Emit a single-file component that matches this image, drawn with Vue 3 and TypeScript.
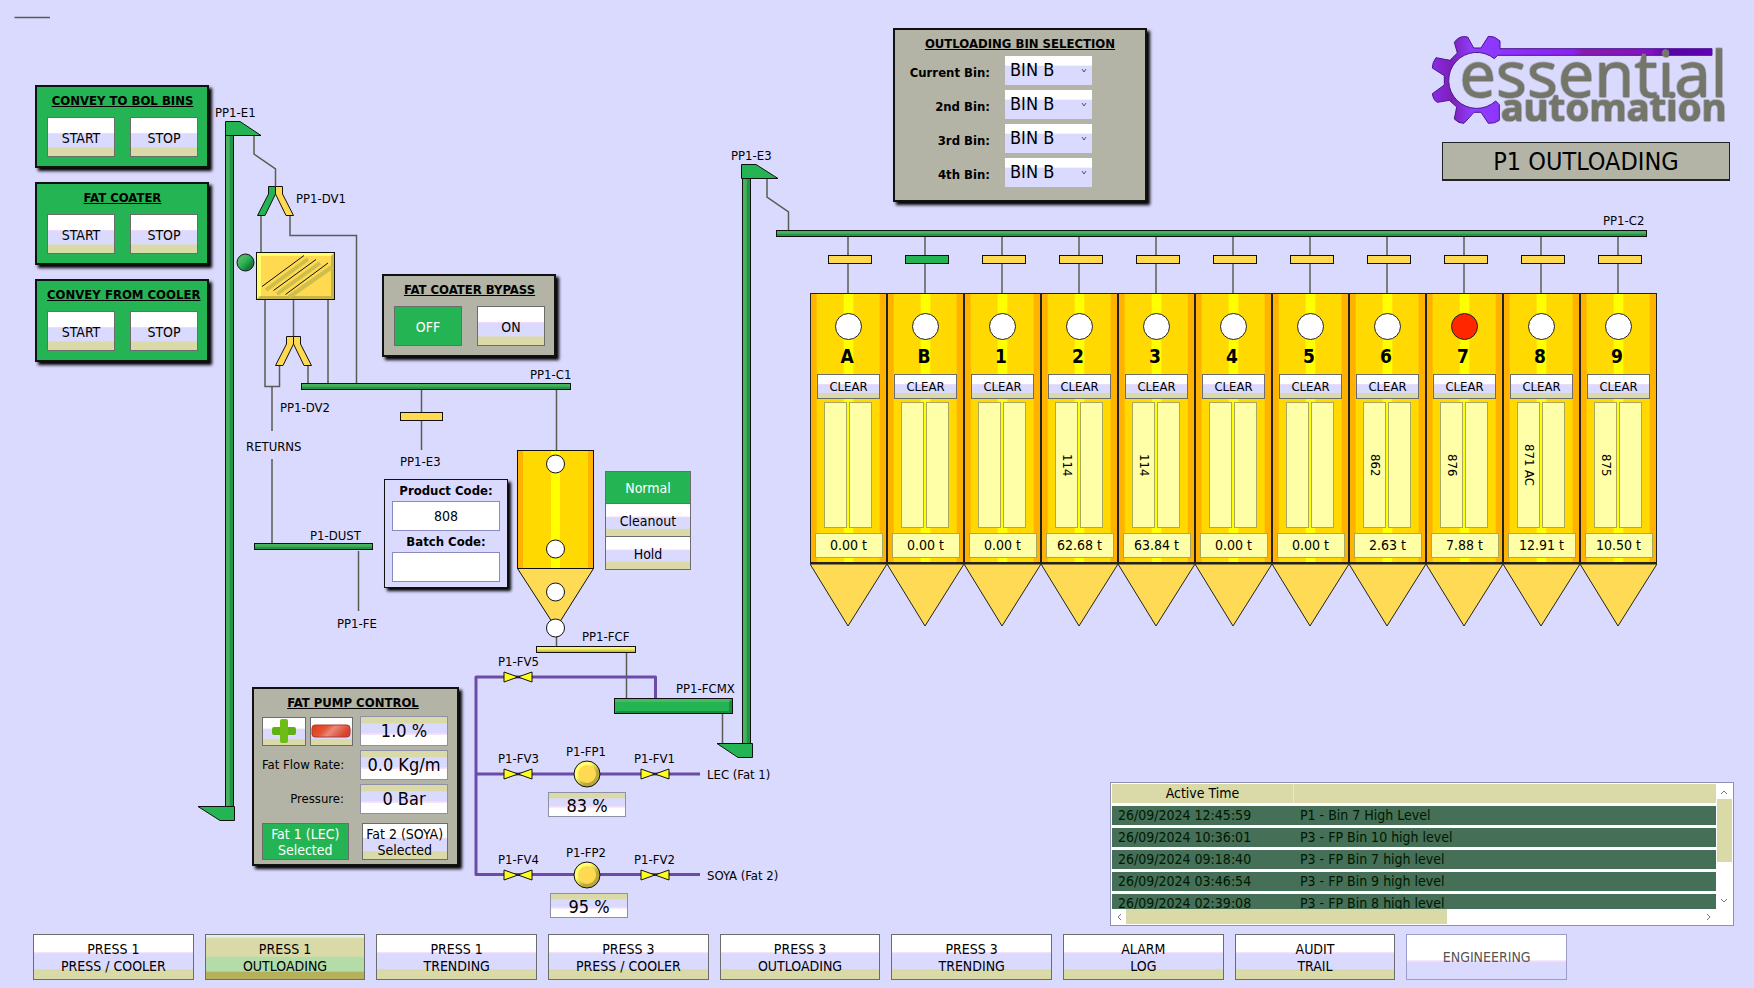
<script setup lang="ts">
import { ref } from 'vue'

interface Bin {
  name: string
  product: string
  weight: string
  high?: boolean
  open?: boolean
}

interface Label {
  x: number
  y: number
  text: string
}

const groups = ['CONVEY TO BOL BINS', 'FAT COATER', 'CONVEY FROM COOLER']

const bins: Bin[] = [
  { name: 'A', product: '', weight: '0.00 t' },
  { name: 'B', product: '', weight: '0.00 t', open: true },
  { name: '1', product: '', weight: '0.00 t' },
  { name: '2', product: '114', weight: '62.68 t' },
  { name: '3', product: '114', weight: '63.84 t' },
  { name: '4', product: '', weight: '0.00 t' },
  { name: '5', product: '', weight: '0.00 t' },
  { name: '6', product: '862', weight: '2.63 t' },
  { name: '7', product: '876', weight: '7.88 t', high: true },
  { name: '8', product: '871 AC', weight: '12.91 t' },
  { name: '9', product: '875', weight: '10.50 t' },
]

const binNames = bins.map((b) => 'BIN ' + b.name)
const selections = ref([
  { id: 'bin-1', label: 'Current Bin:', value: 'BIN B' },
  { id: 'bin-2', label: '2nd Bin:', value: 'BIN B' },
  { id: 'bin-3', label: '3rd Bin:', value: 'BIN B' },
  { id: 'bin-4', label: '4th Bin:', value: 'BIN B' },
])

const bypass = ref('OFF')
const mode = ref('Normal')
const fat = ref(1)
const productCode = ref('808')
const batchCode = ref('')

const labels: Label[] = [
  { x: 215, y: 117, text: 'PP1-E1' },
  { x: 296, y: 203, text: 'PP1-DV1' },
  { x: 280, y: 412, text: 'PP1-DV2' },
  { x: 530, y: 379, text: 'PP1-C1' },
  { x: 246, y: 451, text: 'RETURNS' },
  { x: 400, y: 466, text: 'PP1-E3' },
  { x: 310, y: 540, text: 'P1-DUST' },
  { x: 337, y: 628, text: 'PP1-FE' },
  { x: 582, y: 641, text: 'PP1-FCF' },
  { x: 676, y: 693, text: 'PP1-FCMX' },
  { x: 731, y: 160, text: 'PP1-E3' },
  { x: 1603, y: 225, text: 'PP1-C2' },
  { x: 498, y: 666, text: 'P1-FV5' },
  { x: 498, y: 763, text: 'P1-FV3' },
  { x: 566, y: 756, text: 'P1-FP1' },
  { x: 634, y: 763, text: 'P1-FV1' },
  { x: 707, y: 779, text: 'LEC (Fat 1)' },
  { x: 498, y: 864, text: 'P1-FV4' },
  { x: 566, y: 857, text: 'P1-FP2' },
  { x: 634, y: 864, text: 'P1-FV2' },
  { x: 707, y: 880, text: 'SOYA (Fat 2)' },
]

const valves = [
  { x: 518, y: 677 },
  { x: 518, y: 774 },
  { x: 655, y: 774 },
  { x: 518, y: 875 },
  { x: 655, y: 875 },
]

const pumps = [
  { x: 587, y: 774 },
  { x: 587, y: 875 },
]

const alarms = [
  { time: '26/09/2024 12:45:59', text: 'P1 - Bin 7 High Level' },
  { time: '26/09/2024 10:36:01', text: 'P3 - FP Bin 10 high level' },
  { time: '26/09/2024 09:18:40', text: 'P3 - FP Bin 7 high level' },
  { time: '26/09/2024 03:46:54', text: 'P3 - FP Bin 9 high level' },
  { time: '26/09/2024 02:39:08', text: 'P3 - FP Bin 8 high level' },
]

const screens = [
  ['PRESS 1', 'PRESS / COOLER'],
  ['PRESS 1', 'OUTLOADING'],
  ['PRESS 1', 'TRENDING'],
  ['PRESS 3', 'PRESS / COOLER'],
  ['PRESS 3', 'OUTLOADING'],
  ['PRESS 3', 'TRENDING'],
  ['ALARM', 'LOG'],
  ['AUDIT', 'TRAIL'],
  ['ENGINEERING'],
]
</script>

<template>
  <div class="screen">
    <main class="mimic">
      <svg class="pipes" width="1754" height="930" viewBox="0 0 1754 930" aria-hidden="true">
        <defs>
          <linearGradient id="leg" x1="0" x2="1" y1="0" y2="0">
            <stop offset="0.45" stop-color="#48b25c" />
            <stop offset="0.6" stop-color="#1f9549" />
          </linearGradient>
          <linearGradient id="belt" x1="0" x2="0" y1="0" y2="1">
            <stop offset="0.4" stop-color="#48b25c" />
            <stop offset="0.7" stop-color="#1f9549" />
          </linearGradient>
          <linearGradient id="feeder" x1="0" x2="0" y1="0" y2="1">
            <stop offset="0.4" stop-color="#f8f26a" />
            <stop offset="0.8" stop-color="#c6bb4a" />
          </linearGradient>
          <linearGradient id="shell" x1="0" x2="1" y1="0" y2="0">
            <stop offset="0.075" stop-color="#ffb200" />
            <stop offset="0.075" stop-color="#ffd900" />
            <stop offset="0.44" stop-color="#ffd900" />
            <stop offset="0.44" stop-color="#ffff00" />
            <stop offset="0.56" stop-color="#ffff00" />
            <stop offset="0.56" stop-color="#ffd900" />
            <stop offset="0.925" stop-color="#ffd900" />
            <stop offset="0.925" stop-color="#ffb200" />
          </linearGradient>
          <linearGradient id="rim" x1="0.15" x2="0.85" y1="0.15" y2="0.85">
            <stop offset="0.3" stop-color="#ffff70" />
            <stop offset="0.7" stop-color="#b9a83c" />
          </linearGradient>
          <linearGradient id="lamp" x1="0.15" x2="0.85" y1="0.15" y2="0.85">
            <stop offset="0.2" stop-color="#4cb860" />
            <stop offset="0.5" stop-color="#27ae52" />
            <stop offset="0.85" stop-color="#147c38" />
          </linearGradient>
        </defs>

        <g class="line">
          <path d="M14.500 17.500H50" />
          <path d="M254 136V154L275.500 169V186" />
          <path d="M261 216V252M290 216V235.500H356.500V383" />
          <path d="M265 300V386.500H279.500V366M272 387V431M293.500 300V336M328 300V383M308 366V383" />
          <path d="M421.500 390V450M556.500 390V450M272 459V543M358.500 551V611" />
          <path d="M556.500 636V646M626.500 653V698M722.500 714V743" />
          <path d="M767 179V197L788.500 212V230" />
          <path v-for="(b, i) in bins" :key="b.name" :d="`M${848 + 77 * i} 237V293`" />
        </g>

        <path class="fat" d="M655.500 698V677H476V874.500H700M476 774H700" />

        <g class="part">
          <rect x="225.500" y="135.500" width="8" height="671" fill="url(#leg)" />
          <path class="green" d="M225.500 121.500H240L261 135.500H225.500Z" />
          <path class="green" d="M198 806.500H234.500V820.500H220Z" />
          <rect x="742.500" y="178.500" width="8" height="565" fill="url(#leg)" />
          <path class="green" d="M741.500 164.500H756L778 178.500H741.500Z" />
          <path class="green" d="M717 743.500H752.500V757.500H738Z" />

          <path class="green" d="M268.500 186.500H275.500V194L265 215.500H257.500L268.500 194Z" />
          <path class="yellow" d="M282.500 186.500H275.500V194L286 215.500H293.500L282.500 194Z" />
          <path class="yellow" d="M286.500 336.500H293.500V344L283 365.500H275.500L286.500 344Z" />
          <path class="yellow" d="M300.500 336.500H293.500V344L304 365.500H311.500L300.500 344Z" />

          <circle cx="245.500" cy="262.500" r="8.500" fill="url(#lamp)" />
          <rect class="yellow" x="256.500" y="252.500" width="78" height="47" />
          <path class="lit" d="M257 253H334L331 256H261V295L257 299Z" />
          <path class="dim" d="M334 253V299H257L260 296H331V256Z" />
          <path class="haze" d="M266 290L308 259M277 294L320 263M289 297L332 267" />
          <path d="M262 286.500L304 255.500M273.500 290.500L316 259.500M285.500 294.500L328 263" />

          <rect x="301.500" y="383.500" width="269" height="6" fill="url(#belt)" />
          <rect x="254.500" y="543.500" width="118" height="6" fill="url(#belt)" />
          <rect x="776.500" y="230.500" width="870" height="6" fill="url(#belt)" />
          <rect x="536.500" y="646.500" width="99" height="6" fill="url(#feeder)" />
          <rect class="green" x="614.500" y="698.500" width="118" height="15" />
          <path class="lit-green" d="M615 699H732L729 702H615Z" />
          <path class="dim-green" d="M732 699V713H615L617 711H729V702Z" />

          <rect class="yellow" x="400.500" y="412.500" width="42" height="8" />
          <rect
            v-for="(b, i) in bins"
            :key="b.name"
            :class="b.open ? 'green' : 'yellow'"
            :x="828.5 + 77 * i"
            y="255.500"
            width="43"
            height="8"
          />

          <rect x="517.500" y="450.500" width="76" height="118" fill="url(#shell)" />
          <path class="cone" d="M517.500 568.500H593.500L556 628Z" />
          <circle v-for="y in [464, 549, 592, 628]" :key="y" class="probe" cx="555.500" :cy="y" r="9" />

          <path
            v-for="v in valves"
            :key="`${v.x}-${v.y}`"
            class="valve"
            :d="`M${v.x - 14} ${v.y - 5}L${v.x} ${v.y}L${v.x + 14} ${v.y - 5}V${v.y + 5}L${v.x} ${v.y}L${v.x - 14} ${v.y + 5}Z`"
          />
          <g v-for="p in pumps" :key="p.y">
            <circle :cx="p.x" :cy="p.y" r="13" fill="url(#rim)" />
            <circle class="hub" :cx="p.x" :cy="p.y" r="9" />
          </g>
        </g>

        <text v-for="l in labels" :key="l.text + l.y" class="tag" :x="l.x" :y="l.y">{{ l.text }}</text>
      </svg>

      <div class="starters">
        <section v-for="g in groups" :key="g" class="panel running">
          <h2>{{ g }}</h2>
          <div class="pair">
            <button type="button">START</button>
            <button type="button">STOP</button>
          </div>
        </section>
      </div>

      <div class="side">
        <header class="brand">
          <svg class="logo" viewBox="90 70 900 280" role="img" aria-label="essential automation">
            <defs>
              <linearGradient id="purple" gradientUnits="userSpaceOnUse" x1="97" x2="936" y1="0" y2="0">
                <stop offset="0" stop-color="#8a2be8" />
                <stop offset="0.07" stop-color="#7d1fb4" />
                <stop offset="0.14" stop-color="#8f3dff" />
                <stop offset="0.5" stop-color="#8a22f0" />
                <stop offset="0.54" stop-color="#8a1ca8" />
                <stop offset="0.78" stop-color="#8412c0" />
                <stop offset="0.85" stop-color="#5a00a8" />
                <stop offset="1" stop-color="#6200b4" />
              </linearGradient>
            </defs>
            <path
              class="gear"
              d="M300 117V94Q284 78 265 80L243 115H221L203 82Q178 76 163 98L172 130L150 152L108 144Q97 158 97 175L133 198V226L97 252Q100 272 112 278L148 272L170 292L163 328Q176 342 192 341L222 308H243L265 341Q286 342 298 332V285L287 274A84 84 0 1 1 283 147L293 137H936V117Z"
            />
            <g class="wordmark">
              <text x="178" y="261" font-size="194">essential</text>
              <text x="302" y="335" font-size="115" font-weight="700">automation</text>
            </g>
          </svg>
          <h1>P1 OUTLOADING</h1>
        </header>

        <section class="alarms" aria-label="Active alarms">
          <div class="rows">
            <table>
              <thead>
                <tr>
                  <th>Active Time</th>
                  <th aria-label="Message"></th>
                </tr>
              </thead>
              <tbody>
                <tr v-for="a in alarms" :key="a.time">
                  <td>{{ a.time }}</td>
                  <td>{{ a.text }}</td>
                </tr>
              </tbody>
            </table>
          </div>
          <div class="track down">
            <svg width="8" height="5" viewBox="0 0 8 5"><path d="M1 4L4 1L7 4" /></svg>
            <span class="thumb"></span>
            <svg width="8" height="5" viewBox="0 0 8 5"><path d="M1 1L4 4L7 1" /></svg>
          </div>
          <div class="track across">
            <svg width="5" height="8" viewBox="0 0 5 8"><path d="M4 1L1 4L4 7" /></svg>
            <span class="thumb"></span>
            <svg width="5" height="8" viewBox="0 0 5 8"><path d="M1 1L4 4L1 7" /></svg>
          </div>
        </section>
      </div>

      <section class="panel node bypass">
        <h2>FAT COATER BYPASS</h2>
        <div class="pair">
          <button
            v-for="o in ['OFF', 'ON']"
            :key="o"
            type="button"
            :class="{ on: bypass === o }"
            @click="bypass = o"
          >
            {{ o }}
          </button>
        </div>
      </section>

      <section class="panel node selection">
        <h2>OUTLOADING BIN SELECTION</h2>
        <div v-for="s in selections" :key="s.id" class="choice">
          <label :for="s.id">{{ s.label }}</label>
          <span class="drop">
            <select :id="s.id" v-model="s.value">
              <option v-for="n in binNames" :key="n">{{ n }}</option>
            </select>
            <svg width="6" height="5" viewBox="0 0 6 5"><path d="M1 1L3 4L5 1" /></svg>
          </span>
        </div>
      </section>

      <section class="panel node codes">
        <label for="product">Product Code:</label>
        <input id="product" v-model="productCode" type="text" />
        <label for="batch">Batch Code:</label>
        <input id="batch" v-model="batchCode" type="text" />
      </section>

      <div class="node modes">
        <button
          v-for="m in ['Normal', 'Cleanout', 'Hold']"
          :key="m"
          type="button"
          :class="{ on: mode === m }"
          @click="mode = m"
        >
          {{ m }}
        </button>
      </div>

      <section class="panel node pump">
        <h2>FAT PUMP CONTROL</h2>
        <div class="settings">
          <div class="steps">
            <button type="button" aria-label="Increase">
              <svg width="24" height="24" viewBox="0 0 24 24">
                <rect x="0" y="8" width="24" height="8" rx="2" fill="#5fb012" />
                <rect x="8" y="0" width="8" height="24" rx="2" fill="#6dbd16" />
              </svg>
            </button>
            <button type="button" aria-label="Decrease">
              <svg width="40" height="14" viewBox="0 0 40 14">
                <defs>
                  <linearGradient id="minus" x1="0" x2="1" y1="0" y2="0.3">
                    <stop offset="0" stop-color="#e03c10" />
                    <stop offset="0.4" stop-color="#e25535" />
                    <stop offset="0.6" stop-color="#e98a78" />
                    <stop offset="1" stop-color="#d8412a" />
                  </linearGradient>
                </defs>
                <rect x="1" y="1" width="38" height="12" rx="3" fill="url(#minus)" stroke="#b03a2c" />
              </svg>
            </button>
          </div>
          <output class="value">1.0 %</output>
          <span class="name">Fat Flow Rate:</span>
          <output class="value">0.0 Kg/m</output>
          <span class="name">Pressure:</span>
          <output class="value">0 Bar</output>
        </div>
        <div class="fats">
          <button type="button" :class="{ on: fat === 1 }" @click="fat = 1">Fat 1 (LEC)<br />Selected</button>
          <button type="button" :class="{ on: fat === 2 }" @click="fat = 2">Fat 2 (SOYA)<br />Selected</button>
        </div>
      </section>

      <output class="value node lec">83 %</output>
      <output class="value node soya">95 %</output>

      <div class="node bins">
        <article v-for="b in bins" :key="b.name" class="bin">
          <div class="shell">
            <span class="sensor" :class="{ high: b.high }"></span>
            <h3>{{ b.name }}</h3>
            <button type="button">CLEAR</button>
            <div class="contents">
              <span>{{ b.product }}</span>
              <span></span>
            </div>
            <output>{{ b.weight }}</output>
          </div>
          <svg class="outlet" viewBox="0 0 77 63" aria-hidden="true">
            <path d="M0 0H77L38 62Z" />
          </svg>
        </article>
      </div>
    </main>

    <nav class="screens">
      <button
        v-for="(s, i) in screens"
        :key="i"
        type="button"
        :class="{ current: i === 1 }"
        :disabled="i === 8"
      >
        <span v-for="line in s" :key="line">{{ line }}</span>
      </button>
    </nav>
  </div>
</template>

<style>
body {
  background: #dadaff;
}
</style>

<style scoped>
.screen {
  --glass: linear-gradient(#fff 38%, #f6dcfa 40%, #dadaff 43%, #dadaff 76%, #dadaa8 79%);
  --well: linear-gradient(#dadaa8 20%, #dadaff 26%, #dadaff 56%, #f6dcfa 58%, #f6dcfa 62%, #fff 65%);
  min-height: 100vh;
  display: flex;
  flex-direction: column;
  background: #dadaff;
  color: #000;
  font-family: Tahoma, 'DejaVu Sans Condensed', 'DejaVu Sans', sans-serif;
  font-size: 13px;
  line-height: 16px;
}

*,
*::before {
  box-sizing: border-box;
}

h1,
h2,
h3 {
  margin: 0;
}

button {
  padding: 1px 0 0;
  border: 1px solid #6c6c6c;
  border-radius: 0;
  background: var(--glass);
  color: #000;
  font: inherit;
  font-size: 14px;
}

button.on {
  background: #25b453;
  color: #fff;
}

.mimic {
  position: relative;
  flex: 1;
  display: flex;
  justify-content: space-between;
}

.pipes {
  position: absolute;
  top: 0;
  left: 0;
}

.line path {
  fill: none;
  stroke: #5c5c50;
  stroke-width: 1.500;
}

.fat {
  fill: none;
  stroke: #6a4ca8;
  stroke-width: 3;
  stroke-linejoin: round;
}

.part {
  fill: none;
  stroke: #111;
  stroke-width: 1;
}

.green {
  fill: #25b453;
}

.yellow,
.hub {
  fill: #ffd94f;
}

.cone {
  fill: #ffdb55;
}

.valve {
  fill: #ffff1e;
}

.probe {
  fill: #fff;
}

.hub,
.lit,
.dim,
.lit-green,
.dim-green {
  stroke: none;
}

.lit {
  fill: #ffff6e;
}

.dim {
  fill: #c8b54a;
}

.lit-green {
  fill: #4ab661;
}

.dim-green {
  fill: #188e42;
}

.haze {
  stroke: #cdbf4a;
  stroke-width: 4;
}

.tag {
  font-size: 13px;
}

.starters {
  position: relative;
  display: flex;
  flex-direction: column;
  gap: 14px;
  padding: 85px 0 0 35px;
}

.panel {
  border: 2px solid #111;
  background: #b4b4a6;
  box-shadow: 3px 3px 3px #000;
}

.panel h2 {
  font-size: 13px;
  line-height: 16px;
  text-align: center;
  text-decoration: underline;
  white-space: nowrap;
}

.running,
.bypass {
  width: 174px;
  padding: 6px 9px 9px 10px;
}

.running {
  background: #25b453;
}

.pair {
  display: grid;
  grid-template-columns: 1fr 1fr;
  gap: 15px;
  margin-top: 8px;
}

.pair button {
  height: 40px;
}

.node {
  position: absolute;
}

.bypass {
  top: 274px;
  left: 382px;
}

.selection {
  top: 28px;
  left: 893px;
  width: 254px;
  padding: 6px 0 8px;
}

.selection h2 {
  margin-bottom: 4px;
}

.choice {
  display: flex;
  justify-content: flex-end;
  align-items: center;
  gap: 15px;
  height: 34px;
  padding: 0 53px 5px 0;
}

.choice label {
  padding-top: 4px;
  font-weight: 700;
  white-space: nowrap;
}

.drop {
  position: relative;
  display: flex;
}

.drop select {
  width: 87px;
  height: 29px;
  padding: 0 4px 2px 5px;
  border: 0;
  border-radius: 0;
  appearance: none;
  background: linear-gradient(#fff 32%, #dadaff 34%);
  color: #000;
  font: inherit;
  font-size: 18px;
}

.drop svg {
  position: absolute;
  top: 12px;
  right: 5px;
  fill: none;
  stroke: #555;
  pointer-events: none;
}

.codes {
  top: 479px;
  left: 384px;
  width: 124px;
  display: flex;
  flex-direction: column;
  padding: 3px 7px 2px;
  border-width: 1px;
  background: #dadaff;
  text-align: center;
}

.codes label {
  font-weight: 700;
}

.codes input {
  width: 100%;
  height: 30px;
  margin: 2px 0 3px;
  border: 1px solid #8a8ac0;
  background: #fff;
  font: inherit;
  font-size: 14px;
  text-align: center;
}

.modes {
  top: 471px;
  left: 605px;
  width: 86px;
  display: flex;
  flex-direction: column;
}

.modes button {
  height: 33px;
}

.modes button + button {
  border-top: 0;
}

.pump {
  top: 687px;
  left: 252px;
  width: 207px;
  padding: 6px 9px 4px 8px;
}

.pump h2 {
  padding-right: 4px;
}

.settings {
  display: grid;
  grid-template-columns: 91px 88px;
  justify-content: space-between;
  align-items: center;
  gap: 4px 0;
  margin-top: 5px;
}

.steps {
  display: grid;
  grid-template-columns: 1fr 1fr;
  gap: 4px;
}

.steps button {
  display: grid;
  place-items: center;
  height: 29px;
  padding: 0;
}

.name {
  padding-right: 9px;
  text-align: right;
  white-space: nowrap;
}

.value {
  display: block;
  height: 30px;
  border: 1px solid #8f8fa8;
  background: var(--well);
  font-size: 18px;
  line-height: 28px;
  text-align: center;
  white-space: nowrap;
}

.fats {
  display: grid;
  grid-template-columns: 1fr 1fr;
  gap: 13px;
  margin-top: 9px;
}

.fats button {
  height: 37px;
  padding: 0;
  white-space: nowrap;
}

.lec,
.soya {
  width: 78px;
  height: 25px;
  line-height: 26px;
}

.lec {
  top: 792px;
  left: 548px;
}

.soya {
  top: 893px;
  left: 550px;
}

.bins {
  top: 293px;
  left: 810px;
  display: grid;
  grid-template-columns: repeat(11, 77px);
}

.shell {
  display: flex;
  flex-direction: column;
  align-items: center;
  padding: 19px 0 4px;
  border: 1px solid #222;
  border-width: 1px 1px 2px;
  background: linear-gradient(
    90deg,
    #ffb200 7%,
    #ffd900 8%,
    #ffd900 43%,
    #ff0 44%,
    #ff0 56%,
    #ffd900 57%,
    #ffd900 91%,
    #ffb200 92%
  );
}

.sensor {
  width: 27px;
  height: 27px;
  border: 1px solid #222;
  border-radius: 50%;
  background: #fff;
}

.sensor.high {
  background: #ff2600;
}

.bin h3 {
  height: 34px;
  padding-right: 3px;
  font-size: 19px;
  line-height: 32px;
}

.bin button {
  width: 63px;
  height: 25px;
  font-size: 13px;
}

.contents {
  display: flex;
  gap: 2px;
  margin: 3px 2px 5px 0;
}

.contents span {
  width: 23px;
  height: 126px;
  border: 1px solid #a8a860;
  background: #ffffa8;
  font-size: 13px;
  line-height: 20px;
  text-align: center;
  writing-mode: vertical-rl;
}

.bin output {
  width: 68px;
  height: 25px;
  border: 1px solid #a8a860;
  background: #ffffa8;
  font-size: 14px;
  line-height: 23px;
  text-align: center;
}

.outlet {
  display: block;
  width: 100%;
  fill: #ffdb55;
  stroke: #222;
}

.side {
  position: relative;
  flex: 0 0 624px;
  display: flex;
  flex-direction: column;
  justify-content: space-between;
  align-items: flex-end;
  margin-right: 20px;
  padding: 33px 0 8px;
}

.brand {
  width: 304px;
}

.logo {
  display: block;
  width: 300px;
  overflow: visible;
}

.gear {
  fill: url(#purple);
  stroke: #4a1590;
  stroke-width: 3;
}

.wordmark {
  fill: #74766a;
  font-family: 'Noto Sans', 'Open Sans', sans-serif;
  filter: drop-shadow(-1px -1px 0 #a9aaa8) drop-shadow(1px 1px 1px #3a3c38);
}

.brand h1 {
  margin: 16px 4px 0 12px;
  padding: 2px 0 0;
  border: 2px solid #222;
  border-width: 1px 1px 2px;
  background: #b4b4a6;
  font-size: 25px;
  font-weight: 400;
  line-height: 34px;
  text-align: center;
}

.alarms {
  display: grid;
  grid-template-columns: 1fr 16px;
  grid-template-rows: 125px 15px;
  align-self: stretch;
  padding: 1px;
  border: 1px solid #8f8fb8;
  background: #fff;
}

.rows {
  overflow: hidden;
}

.rows table {
  width: 100%;
  border-collapse: separate;
  border-spacing: 0 3px;
  margin-top: -3px;
  table-layout: fixed;
  font-size: 14px;
  line-height: 19px;
}

.rows th {
  height: 19px;
  padding: 0;
  background: #dadaa8;
  font-weight: 400;
}

.rows th:first-child {
  width: 182px;
  border-right: 1px solid #e8e8c8;
}

.rows td {
  height: 19px;
  padding: 0 0 0 6px;
  background: #456f56;
  color: #001800;
  white-space: nowrap;
}

.track {
  display: flex;
  align-items: center;
}

.track svg {
  fill: none;
  stroke: #777;
}

.thumb {
  background: #dadaa8;
}

.down {
  flex-direction: column;
  padding: 6px 0;
}

.down .thumb {
  width: 15px;
  height: 63px;
  margin: 4px 0 auto;
}

.across {
  padding: 0 5px;
}

.across .thumb {
  width: 54%;
  height: 15px;
  margin: 0 auto 0 4px;
}

.screens {
  display: grid;
  grid-template-columns: repeat(9, 1fr);
  gap: 11px;
  padding: 0 187px 8px 33px;
}

.screens button {
  display: flex;
  flex-direction: column;
  justify-content: center;
  align-items: center;
  height: 46px;
  line-height: 17px;
  text-align: center;
}

.screens .current {
  background: linear-gradient(#e0efef 5%, #dadaa8 7%, #dadaa8 48%, #b4dca8 51%, #b4dca8 82%, #b5b05a 85%);
}

.screens button:disabled {
  border-color: #9c9cc8;
  background: linear-gradient(#fff 56%, #f6dcfa 59%, #dadaff 63%);
  color: #555;
}
</style>
